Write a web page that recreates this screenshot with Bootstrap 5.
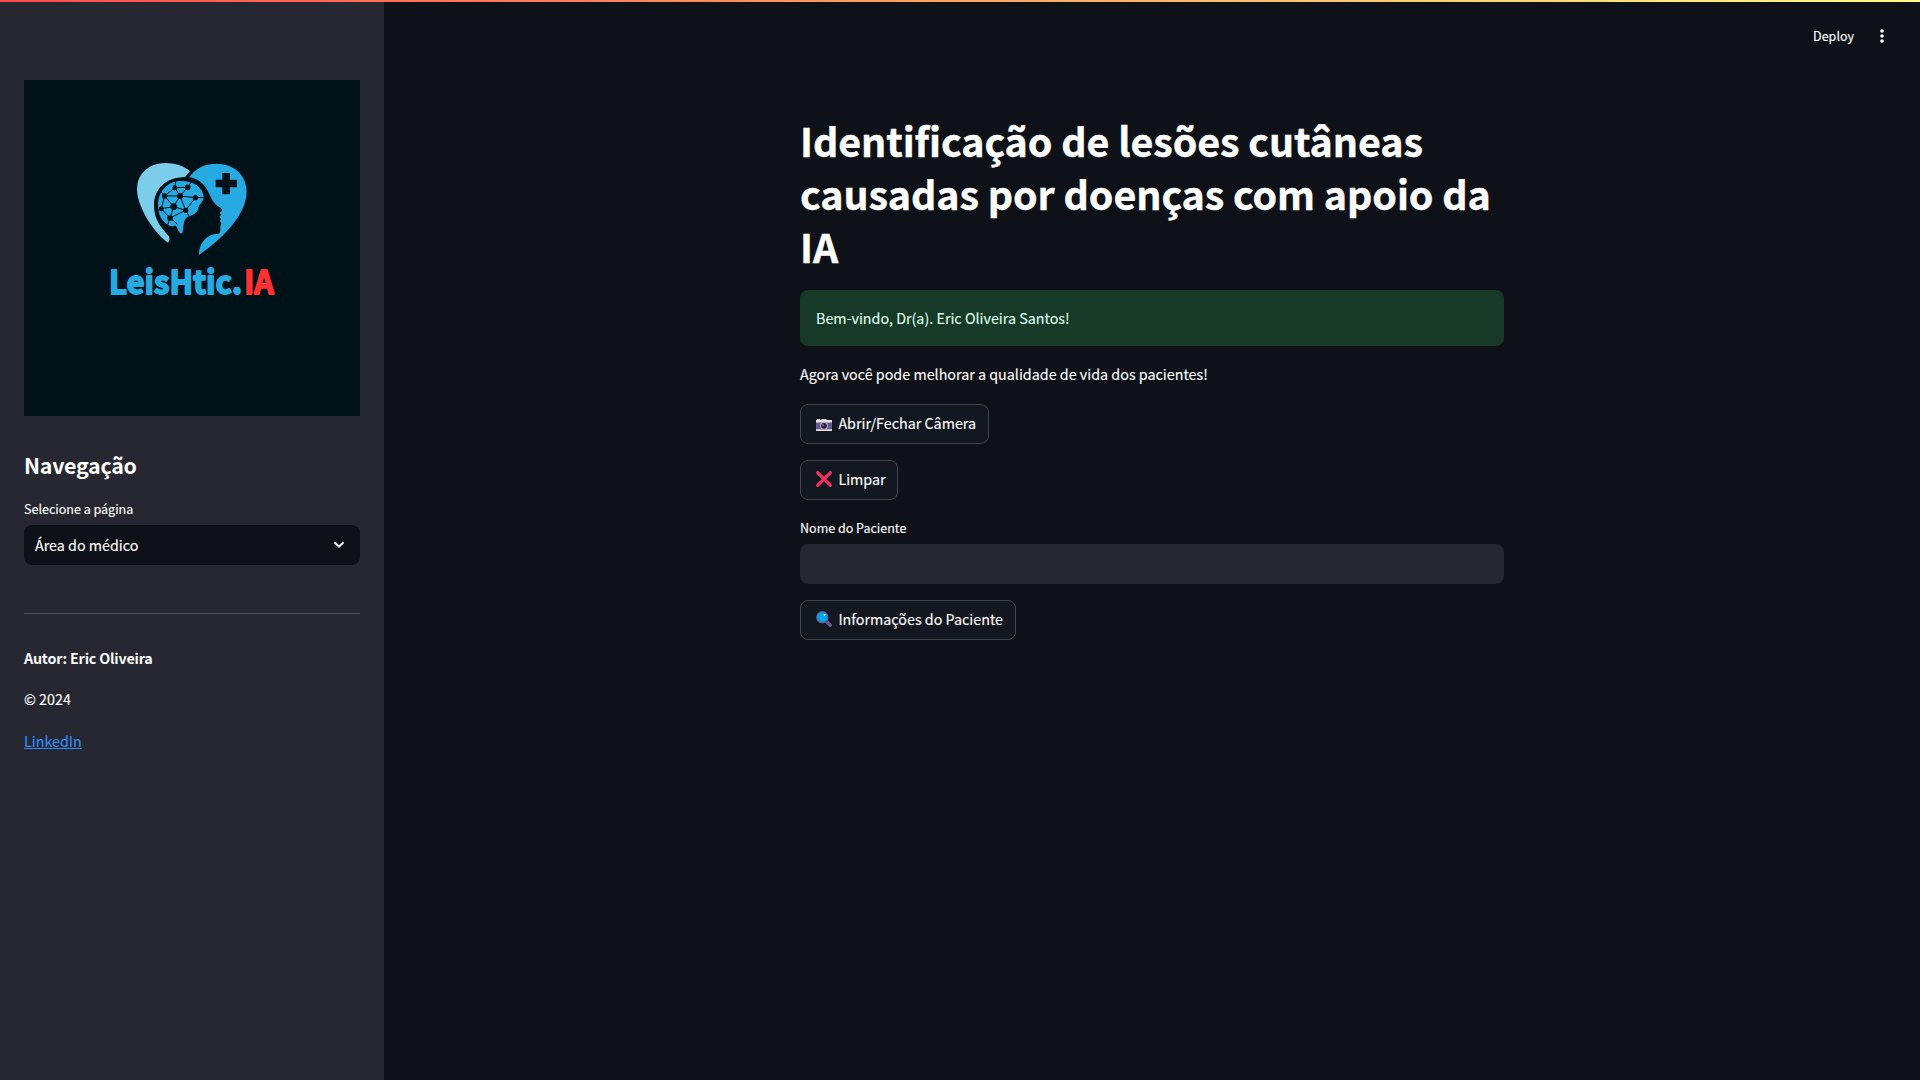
<!DOCTYPE html>
<html lang="pt-BR" data-bs-theme="dark">
<head>
<meta charset="utf-8">
<meta name="viewport" content="width=device-width, initial-scale=1">
<title>LeisHtic.IA</title>
<link href="https://cdn.jsdelivr.net/npm/bootstrap@5.3.0/dist/css/bootstrap.min.css" rel="stylesheet">
<style>
  body { background:#0e1117; color:#fafafa; font-family:"Noto Sans CJK JP","Noto Sans",sans-serif; font-size:14.32px; line-height:26px; -webkit-text-stroke:.15px; }
  .top-line { height:2px; background:linear-gradient(90deg,#ff4b4b,#fffd80); z-index:5; }
  .side { width:384px; background:#262730; padding:80px 24px 0; }
  .logo { width:336px; height:336px; background:#001117; }
  .side h2 { font-size:21.4px; line-height:29px; font-weight:700; margin:34px 0 0; letter-spacing:-.25px; -webkit-text-stroke:0; }
  .small-label { font-size:12.53px; line-height:21px; }
  .side .small-label { margin:19px 0 6px; }
  .main-col .small-label { margin:17px 0 6px; }
  .picker { height:40px; border-radius:8px; background:#0e1117; padding:0 13px 0 11px; }
  .side hr { margin:48px 0 31px; border-color:#fafafa; opacity:.2; }
  .side p { margin:0 0 15.5px; }
  .side .author { letter-spacing:-.19px; margin-bottom:15px; -webkit-text-stroke:0; }
  .side a { color:#2f8cf5; }
  .tools { height:60px; padding:12px 31px 0 0; font-size:12.53px; }
  .tools-row { height:48px; gap:21px; }
  .main-col { width:704px; margin:0 auto; padding-top:54px; }
  h1 { font-size:39.4px; line-height:52.8px; font-weight:700; letter-spacing:-.085px; margin:0 0 17.6px; -webkit-text-stroke:.4px; }
  .alert-ok { height:56px; padding:0 16px; border:0; border-radius:8px; background:#173928; color:#dffde9; margin:0 0 15px; }
  .intro { margin:0 0 17px; }
  .btn-st { --bs-btn-color:#fafafa; --bs-btn-bg:#131720; --bs-btn-border-color:#41444c; height:40px; padding:0 11.6px 1px 15px; border-radius:8px; font-size:14.32px; line-height:26px; gap:6.4px; }
  .field { height:40px; border:0; border-radius:8px; background:#262730; }
</style>
<script src="https://cdn.jsdelivr.net/npm/bootstrap@5.3.0/dist/js/bootstrap.bundle.min.js"></script>
</head>
<body>
<div class="top-line fixed-top"></div>
<div class="d-flex min-vh-100">
  <aside class="side flex-shrink-0">
    <svg class="logo d-block" viewBox="0 0 336 336">
      <g transform="translate(106 75.3) scale(.33333)">
        <path fill="#7bcde9" d="M180 48C150 20 92 16 60 34C24 54 15 90 25 130C38 180 80 238 114 262Q121 254 117 243C90 215 72 190 72 150C72 100 108 66 165 65Z"/>
        <path fill="#27aae1" d="M177 66C198 38 225 25 260 25C312 25 350 60 350 108C350 175 285 245 207 299C206 266 230 235 262 236C270 235 272 230 271 215L274 203L270 198L273 191L268 185L274 178L269 172Q276 169 276 163C273 156 262 154 254 144C240 126 237 108 222 90C211 77 197 68 177 66Z"/>
        <path fill="#001117" d="M277 53h23v20h21v23h-21v21h-23v-21h-20v-23h20z"/>
        <path fill="#27aae1" d="M84 150C84 108 112 79 150 77C190 76 219 95 221 125C221 140 210 143 206 155C204 172 190 180 178 182C168 186 162 194 161 207L158 231Q153 238 148 231L138 211Q134 209 129 213Q121 213 113 208C94 198 84 175 84 150Z"/>
        <g stroke="#001117" stroke-width="3" fill="none">
          <path d="M135 97L137 76M135 97L173 96L185 78M135 97L104 122L94 160L120 188L167 165L196 127H224M104 122L150 122L196 127M135 97L150 122L173 96M104 122L131 154L150 122L167 165L131 154L94 160M131 154L120 188M104 122L92 108M94 160L84 166M120 188L112 212M120 188L142 206M167 165L178 184"/>
        </g>
        <g fill="#001117"><circle cx="135" cy="97" r="7.5"/><circle cx="173" cy="96" r="8.5"/><circle cx="104" cy="122" r="8"/><circle cx="150" cy="122" r="9"/><circle cx="196" cy="127" r="8"/><circle cx="131" cy="154" r="10"/><circle cx="94" cy="160" r="7.5"/><circle cx="167" cy="165" r="8"/><circle cx="120" cy="188" r="8.5"/></g>
      </g>
      <g font-weight="700" font-size="32.5" stroke-width="1.8" stroke-linejoin="round">
        <text x="85" y="214" fill="#27aae1" stroke="#27aae1" textLength="133" lengthAdjust="spacingAndGlyphs">LeisHtic.</text>
        <text x="220.2" y="214" fill="#ff3131" stroke="#ff3131" textLength="29.5" lengthAdjust="spacingAndGlyphs">IA</text>
      </g>
    </svg>
    <h2>Navegação</h2>
    <div class="small-label">Selecione a página</div>
    <div class="picker d-flex align-items-center justify-content-between">
      <span>Área do médico</span>
      <svg width="16" height="16" viewBox="0 0 16 16" fill="none" stroke="#fafafa" stroke-width="2"><path d="M3.5 5.2L8 9.6L12.5 5.2"/></svg>
    </div>
    <hr>
    <p class="author fw-bold">Autor: Eric Oliveira</p>
    <p>© 2024</p>
    <p><a href="#">LinkedIn</a></p>
  </aside>
  <main class="flex-grow-1">
    <div class="tools d-flex justify-content-end align-items-start">
      <div class="tools-row d-flex align-items-center">
        <span>Deploy</span>
        <svg width="14" height="16" viewBox="0 0 14 16" fill="#fafafa"><circle cx="7" cy="3" r="1.8"/><circle cx="7" cy="8" r="1.8"/><circle cx="7" cy="13" r="1.8"/></svg>
      </div>
    </div>
    <div class="main-col">
      <h1>Identificação de lesões cutâneas causadas por doenças com apoio da IA</h1>
      <div class="alert alert-ok d-flex align-items-center">Bem-vindo, Dr(a). Eric Oliveira Santos!</div>
      <p class="intro">Agora você pode melhorar a qualidade de vida dos pacientes!</p>
      <div class="d-flex flex-column align-items-start gap-3">
        <button class="btn btn-st d-flex align-items-center">
          <svg width="16" height="16" viewBox="0 0 16 16"><path fill="#e5e2e8" d="M0 5h1V4h3v1h1l1-1h4l1 1h5v11H0z"/><path fill="#635994" d="M0 7.5h16v6.8H0z"/><circle cx="8" cy="10.8" r="4" fill="#aeaab8"/><circle cx="8" cy="10.8" r="2.9" fill="#321b41"/><circle cx="7.2" cy="10" r=".9" fill="#8d65c5"/></svg>
          <span>Abrir/Fechar Câmera</span>
        </button>
        <button class="btn btn-st d-flex align-items-center">
          <svg width="16" height="16" viewBox="0 0 16 16" stroke="#f92f60" stroke-width="3" stroke-linecap="round"><path d="M1.6 1.6L14.4 14.4M14.4 1.6L1.6 14.4"/></svg>
          <span>Limpar</span>
        </button>
      </div>
      <label class="small-label d-block" for="paciente">Nome do Paciente</label>
      <input id="paciente" class="form-control field mb-3" type="text">
      <button class="btn btn-st d-flex align-items-center">
        <svg width="16" height="16" viewBox="0 0 16 16"><path d="M10.5 10.5L14.3 14.3" stroke="#635994" stroke-width="3.4" stroke-linecap="round"/><circle cx="6.3" cy="6.3" r="5.6" fill="#00a6ed" stroke="#635994" stroke-width="1.2"/><circle cx="8.6" cy="4" r="1" fill="#d4edff"/></svg>
        <span>Informações do Paciente</span>
      </button>
    </div>
  </main>
</div>
</body>
</html>
